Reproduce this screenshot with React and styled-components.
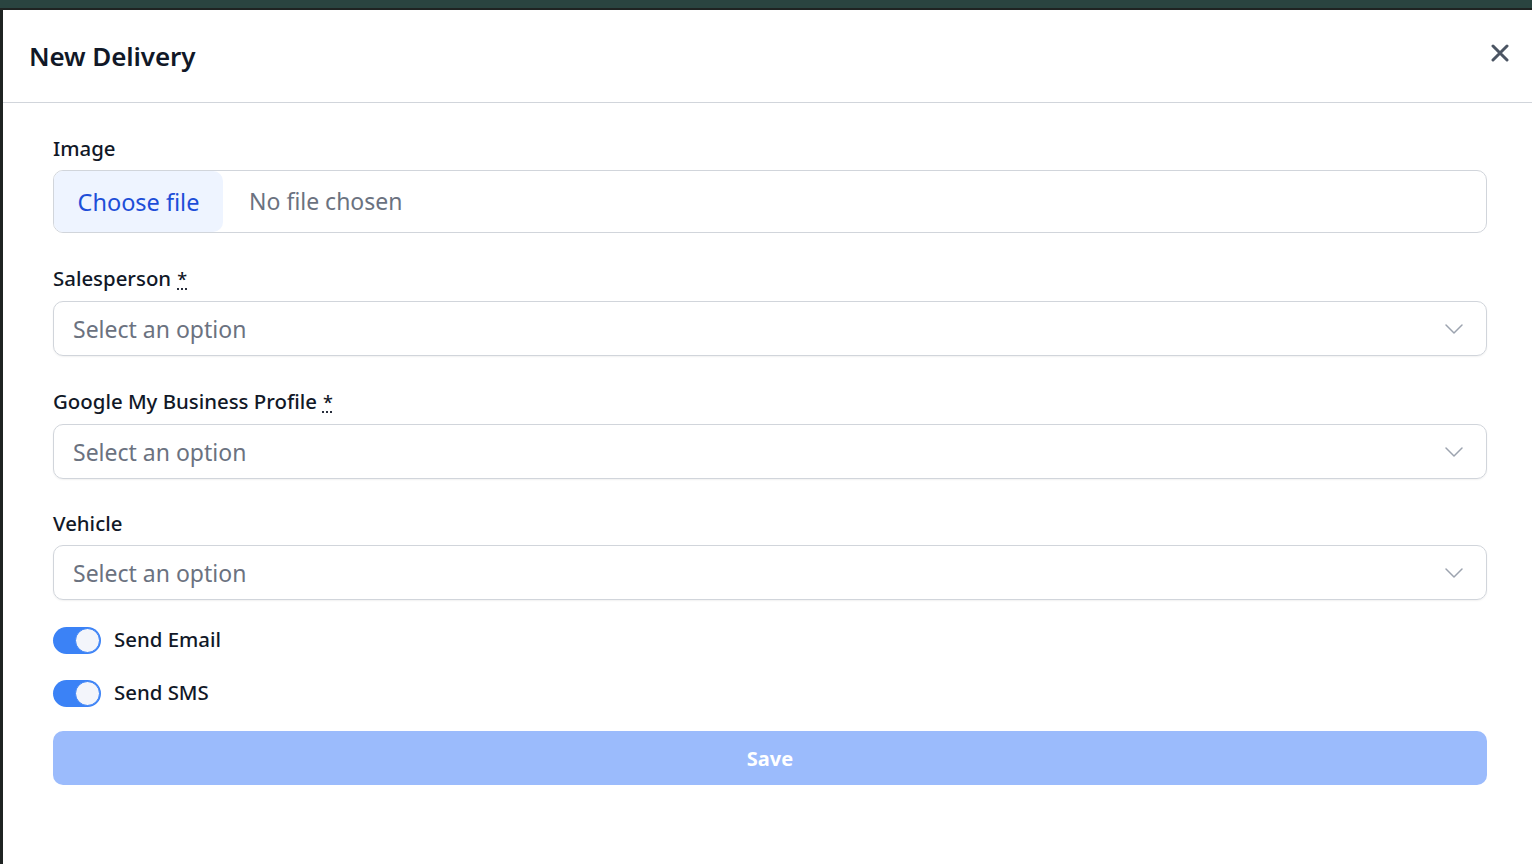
import React from 'react'
import styled, { createGlobalStyle } from 'styled-components'

const GlobalStyle = createGlobalStyle`
  html, body {
    margin: 0;
    padding: 0;
    height: 100%;
    overflow: hidden;
    background: #2b2f2e;
  }
  body {
    font-family: "Noto Sans", "Open Sans", sans-serif;
  }
  * { box-sizing: border-box; }
`

const Backdrop = styled.div`
  width: 1532px;
  height: 864px;
  background: #1f2322;
  border-top: 8px solid #2a4440;
  padding-top: 2px;
  padding-left: 3px;
  display: flex;
  overflow: hidden;
`
const Modal = styled.div`
  width: 1534px;
  flex-shrink: 0;
  background: #fff;
  display: flex;
  flex-direction: column;
`
const Header = styled.div`
  height: 93px;
  display: flex;
  align-items: center;
  justify-content: space-between;
  padding: 0 19px 0 26px;
  border-bottom: 1px solid #d1d5db;
`
const Title = styled.h2`
  margin: 0;
  font-size: 26px;
  font-weight: 600;
  color: #111827;
  letter-spacing: -0.1px;
`
const Close = styled.button`
  border: none;
  background: none;
  padding: 0;
  width: 24px;
  height: 24px;
  display: flex;
  align-items: center;
  justify-content: center;
  margin-top: -7px;
  margin-right: 6px;
  color: #4b5563;
`
const Body = styled.div`
  padding: 30px 50px 0 50px;
  display: flex;
  flex-direction: column;
`
const Field = styled.div`
  display: flex;
  flex-direction: column;
  margin-bottom: ${p => p.$mb || 24}px;
`
const Label = styled.label`
  font-size: 20.4px;
  font-weight: 500;
  color: #111827;
  line-height: 30px;
  margin-bottom: 7px;
`
const Req = styled.abbr`
  text-decoration: underline dotted;
  text-underline-offset: 3px;
  margin-left: 6px;
  font-size: 18px;
`
const FileBox = styled.div`
  height: 63px;
  border: 1px solid #d1d5db;
  border-radius: 10px;
  display: flex;
  align-items: center;
  overflow: hidden;
`
const FileButton = styled.div`
  height: 100%;
  width: 169px;
  background: #eef4ff;
  border-radius: 0 10px 10px 0;
  color: #1d4ed8;
  font-size: 23.5px;
  display: flex;
  align-items: center;
  justify-content: center;
`
const FileText = styled.span`
  font-size: 23px;
  color: #6b7280;
  margin-left: 26px;
  padding-bottom: 2px;
`
const Select = styled.div`
  height: 55px;
  border: 1px solid #d1d5db;
  border-radius: 10px;
  box-shadow: 0 1px 2px rgba(0, 0, 0, 0.06);
  display: flex;
  align-items: center;
  justify-content: space-between;
  padding: 0 22px 0 19px;
  font-size: 23px;
  color: #6b7280;
`
const Toggles = styled.div`
  display: flex;
  flex-direction: column;
  gap: 23px;
  margin-top: 2px;
`
const ToggleRow = styled.div`
  display: flex;
  align-items: center;
  gap: 13px;
`
const Track = styled.div`
  width: 48px;
  height: 27px;
  border-radius: 14px;
  background: #3b82f6;
  position: relative;
`
const Thumb = styled.div`
  position: absolute;
  top: 1px;
  right: 1px;
  width: 25px;
  height: 25px;
  border-radius: 50%;
  background: #f3f5fb;
  border: 1px solid #3b82f6;
`
const ToggleLabel = styled.span`
  font-size: 20.4px;
  font-weight: 500;
  color: #111827;
  padding-bottom: 2px;
`
const Save = styled.button`
  margin-top: 23px;
  height: 54px;
  border: none;
  border-radius: 10px;
  background: #9bbbfc;
  color: #fff;
  font-family: inherit;
  font-size: 20px;
  font-weight: 700;
`

const Chevron = () => (
  <svg width="20" height="20" viewBox="0 0 20 20" fill="none" stroke="#9ca3af" strokeWidth="1.5" strokeLinecap="round" strokeLinejoin="round">
    <path d="M2 6l8 8 8-8" />
  </svg>
)

const SelectField = ({ label, required, mb }) => (
  <Field $mb={mb}>
    <Label>
      {label}
      {required && <Req title="required">*</Req>}
    </Label>
    <Select>
      <span>Select an option</span>
      <Chevron />
    </Select>
  </Field>
)

const Toggle = ({ children }) => (
  <ToggleRow>
    <Track>
      <Thumb />
    </Track>
    <ToggleLabel>{children}</ToggleLabel>
  </ToggleRow>
)

const App = () => {
  return (
    <Backdrop>
      <GlobalStyle />
      <Modal>
        <Header>
          <Title>New Delivery</Title>
          <Close>
            <svg width="18" height="18" viewBox="0 0 18 18" stroke="currentColor" strokeWidth="3" strokeLinecap="round">
              <path d="M2 2l14 14M16 2L2 16" />
            </svg>
          </Close>
        </Header>
        <Body>
          <Field $mb={30}>
            <Label>Image</Label>
            <FileBox>
              <FileButton>Choose file</FileButton>
              <FileText>No file chosen</FileText>
            </FileBox>
          </Field>
          <SelectField label="Salesperson" required mb={30} />
          <SelectField label="Google My Business Profile" required mb={29} />
          <SelectField label="Vehicle" mb={23} />
          <Toggles>
            <Toggle>Send Email</Toggle>
            <Toggle>Send SMS</Toggle>
          </Toggles>
          <Save>Save</Save>
        </Body>
      </Modal>
    </Backdrop>
  )
}

export default App
